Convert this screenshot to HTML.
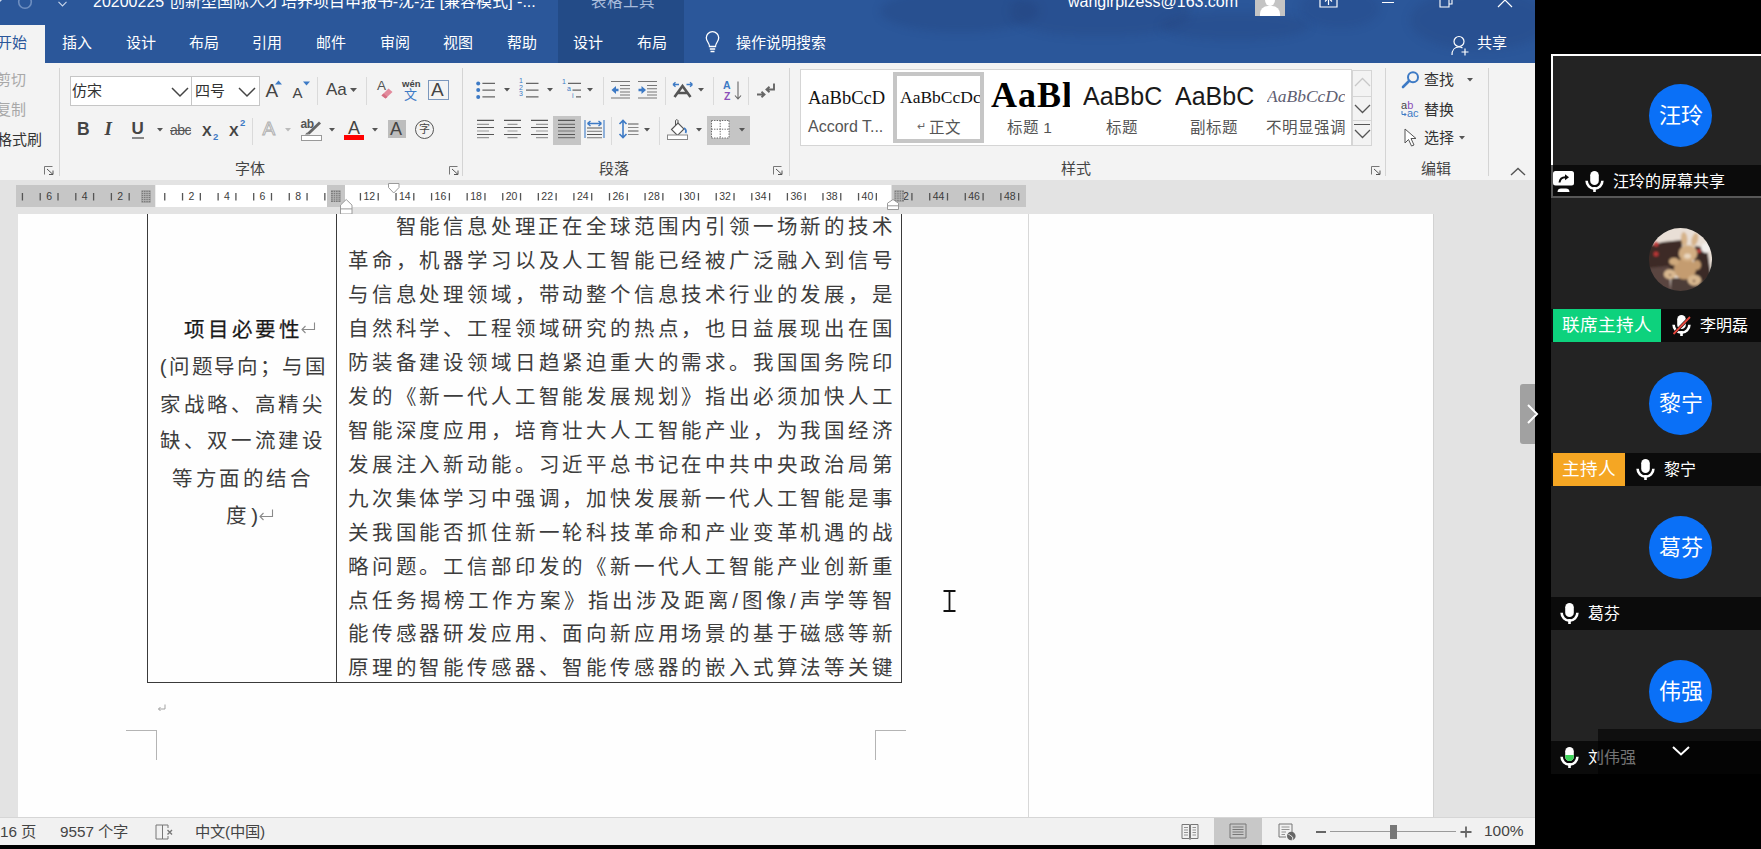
<!DOCTYPE html>
<html lang="zh-CN"><head><meta charset="utf-8">
<style>
*{box-sizing:border-box}
html,body{margin:0;padding:0}
body{width:1761px;height:849px;overflow:hidden;background:#000;position:relative;font-family:"Liberation Sans",sans-serif;color:#262626}
.a{position:absolute;white-space:nowrap}
svg{position:absolute;overflow:visible}
#word{position:absolute;left:0;top:0;width:1535px;height:845px;background:#e3e3e3;overflow:hidden}
#blue{position:absolute;left:0;top:0;width:1535px;height:63px;background:#2b579a}
#ctx{position:absolute;left:558px;top:0;width:126px;height:63px;background:#234b87}
.tab{position:absolute;top:33px;font-size:15px;color:#fff;line-height:20px;white-space:nowrap}
#ribbon{position:absolute;left:0;top:63px;width:1535px;height:117px;background:#f3f3f3}
.sep{position:absolute;top:5px;width:1px;height:108px;background:#d4d4d4}
.glabel{position:absolute;top:96px;font-size:15px;color:#444;line-height:20px;white-space:nowrap}
.rl{position:absolute;font-size:14px;color:#333;line-height:18px;white-space:nowrap}
#ruler{position:absolute;left:16px;top:185px;width:1010px;height:22px;background:#c6c6c6}
#page{position:absolute;left:18px;top:214px;width:1415px;height:603px;background:#fefefe;overflow:hidden}
.fl{position:absolute;display:flex;justify-content:space-between;height:24px;line-height:24px;font-size:20.5px;color:#3d3d3d;font-weight:400}
.fl span{display:block}
.fl.b{font-weight:400;color:#1a1a1a;-webkit-text-stroke:0.25px #1a1a1a}
#status{position:absolute;left:0;top:817px;width:1535px;height:28px;background:#f1f1f1;border-top:1px solid #d6d6d6}
.st{position:absolute;top:4px;font-size:15.3px;color:#444;line-height:20px;white-space:nowrap}
#panel{position:absolute;left:1535px;top:0;width:226px;height:849px;background:#000}
.tile{position:absolute;left:16px;width:210px;background:#232323}
.circ{position:absolute;left:114px;width:63px;height:63px;border-radius:50%;background:#0a70f7;color:#fff;font-size:22px;text-align:center;line-height:63px}
.nbar{position:absolute;left:0;width:210px;height:32px;background:#0e0e0e;color:#fff;font-size:15px;line-height:32px;white-space:nowrap}
</style></head><body>
<div id="word">
  <div id="blue"></div>
  <div class="a" style="left:880px;top:-10px;width:160px;height:42px;border-radius:50%;background:rgba(25,45,95,0.16);filter:blur(4px)"></div>
  <div class="a" style="left:1010px;top:-14px;width:180px;height:50px;border-radius:45%;background:rgba(25,45,95,0.14);filter:blur(4px)"></div>
  <div class="a" style="left:1160px;top:12px;width:150px;height:28px;border-radius:50%;background:rgba(25,45,95,0.14);filter:blur(4px)"></div>
  <div class="a" style="left:1300px;top:-12px;width:80px;height:40px;border-radius:50%;background:rgba(25,45,95,0.12);filter:blur(4px)"></div>
  <div class="a" style="left:1410px;top:-10px;width:140px;height:60px;border-radius:50%;background:rgba(25,45,95,0.14);filter:blur(5px)"></div>
  <div id="ctx"></div>
  <!-- title bar -->
  <svg style="left:-4px;top:-4px" width="8" height="8" viewBox="0 0 8 8"><path d="M1 3L4 6L7 3Z" fill="#c9d6ea"/></svg>
  <svg style="left:17px;top:-6px" width="16" height="18" viewBox="0 0 16 18"><circle cx="8" cy="8" r="6.3" stroke="#6f8fc0" stroke-width="1.6" fill="none"/></svg>
  <svg style="left:58px;top:1px" width="9" height="6" viewBox="0 0 9 6"><path d="M0.5 0.8L4.5 5L8.5 0.8" stroke="#c9d6ea" stroke-width="1.1" fill="none"/></svg>
  <div class="a" style="left:93px;top:-7px;font-size:16px;line-height:18px;color:#fff">20200225 创新型国际人才培养项目申报书-沈-汪 [兼容模式] -...</div>
  <div class="a" style="left:591px;top:-7px;font-size:15.5px;line-height:18px;color:#a9bcdb">表格工具</div>
  <div class="a" style="left:1068px;top:-7px;font-size:16px;line-height:18px;color:#fff">wangirpizess@163.com</div>
  <div class="a" style="left:1255px;top:0;width:30px;height:16px;background:#c4c4c4;overflow:hidden">
    <div class="a" style="left:10px;top:-6px;width:10px;height:12px;border-radius:50%;background:#fff"></div>
    <div class="a" style="left:5px;top:6px;width:20px;height:14px;border-radius:8px 8px 0 0;background:#fff"></div>
  </div>
  <svg style="left:1319px;top:-6px" width="19" height="14" viewBox="0 0 19 14"><path d="M1 4V13H18V4M6 7.5L9.5 4L13 7.5M9.5 4V11" stroke="#fff" stroke-width="1.2" fill="none"/></svg>
  <div class="a" style="left:1382px;top:2px;width:12px;height:1px;background:#fff"></div>
  <svg style="left:1439px;top:-5px" width="15" height="13" viewBox="0 0 15 13"><path d="M1 4V12H10V4ZM4 4V1H13V9H10" stroke="#fff" stroke-width="1.1" fill="none"/></svg>
  <svg style="left:1497px;top:-7px" width="16" height="15" viewBox="0 0 16 15"><path d="M1 0L15 14M15 0L1 14" stroke="#fff" stroke-width="1.2"/></svg>
  <!-- tabs -->
  <div class="a" style="left:0;top:25px;width:45px;height:38px;background:#f3f3f3"></div>
  <div class="tab" style="left:-3px;color:#2b579a">开始</div>
  <div class="tab" style="left:62px">插入</div>
  <div class="tab" style="left:126px">设计</div>
  <div class="tab" style="left:189px">布局</div>
  <div class="tab" style="left:252px">引用</div>
  <div class="tab" style="left:316px">邮件</div>
  <div class="tab" style="left:380px">审阅</div>
  <div class="tab" style="left:443px">视图</div>
  <div class="tab" style="left:507px">帮助</div>
  <div class="tab" style="left:573px">设计</div>
  <div class="tab" style="left:637px">布局</div>
  <svg style="left:705px;top:31px" width="15" height="23" viewBox="0 0 15 23"><path d="M4.5 15.5C4.5 12 1.3 10.5 1.3 6.8A6.2 6.2 0 0 1 13.7 6.8C13.7 10.5 10.5 12 10.5 15.5Z" stroke="#fff" stroke-width="1.3" fill="none"/><path d="M4.8 18H10.2M5.5 20.5H9.5" stroke="#fff" stroke-width="1.3"/></svg>
  <div class="tab" style="left:736px">操作说明搜索</div>
  <svg style="left:1451px;top:35px" width="19" height="21" viewBox="0 0 19 21"><circle cx="8" cy="6.5" r="5" stroke="#fff" stroke-width="1.2" fill="none"/><path d="M1 20C1 15 4 12 8 12C9.5 12 10.5 12.3 11.5 13" stroke="#fff" stroke-width="1.2" fill="none"/><path d="M14 13.5V20.5M10.5 17H17.5" stroke="#fff" stroke-width="1.2"/></svg>
  <div class="tab" style="left:1477px">共享</div>
  <div id="ribbon">
    <!-- clipboard (partial) -->
    <div class="rl" style="left:-4px;top:8px;font-size:15px;color:#a8a8a8">剪切</div>
    <div class="rl" style="left:-4px;top:38px;font-size:15px;color:#a8a8a8">复制</div>
    <div class="rl" style="left:-3px;top:68px;font-size:15px;color:#333">格式刷</div>
    <svg style="left:44px;top:103px" width="10" height="9" viewBox="0 0 10 9"><path d="M0.5 8.5V0.5H8.5" stroke="#777" fill="none"/><path d="M3 3L9 8.5M9 4.5V8.5H5" stroke="#555" fill="none"/></svg>
    <div class="sep" style="left:59px"></div>

    <!-- font group -->
    <div class="a" style="left:70px;top:13px;width:122px;height:30px;background:#fff;border:1px solid #c6c6c6"></div>
    <div class="a" style="left:191px;top:13px;width:69px;height:30px;background:#fff;border:1px solid #c6c6c6"></div>
    <div class="rl" style="left:72px;top:19px;font-size:15px;color:#333">仿宋</div>
    <div class="rl" style="left:195px;top:19px;font-size:15px;color:#333">四号</div>
    <svg style="left:171px;top:24px" width="18" height="10" viewBox="0 0 18 10"><path d="M1 1L9 9L17 1" stroke="#444" stroke-width="1.5" fill="none"/></svg>
    <svg style="left:238px;top:24px" width="18" height="10" viewBox="0 0 18 10"><path d="M1 1L9 9L17 1" stroke="#444" stroke-width="1.5" fill="none"/></svg>
    <div class="a" style="left:265.5px;top:17px;font-size:19px;line-height:22px;color:#444">A</div>
    <svg style="left:275px;top:17px" width="7" height="5" viewBox="0 0 7 5"><path d="M0 4.5L3.5 0.5L7 4.5Z" fill="#3d7ac5"/></svg>
    <div class="a" style="left:292.5px;top:21px;font-size:15px;line-height:18px;color:#444">A</div>
    <svg style="left:303px;top:18px" width="7" height="5" viewBox="0 0 7 5"><path d="M0 0.5L3.5 4.5L7 0.5Z" fill="#3d7ac5"/></svg>
    <div class="sep" style="left:317px;top:14px;height:28px;background:#dadada"></div>
    <div class="a" style="left:326px;top:17px;font-size:17px;line-height:20px;color:#444">Aa</div>
    <svg style="left:350px;top:25px" width="7" height="4" viewBox="0 0 7 4"><path d="M0 0L3.5 4L7 0Z" fill="#555"/></svg>
    <div class="sep" style="left:366px;top:14px;height:28px;background:#dadada"></div>
    <!-- clear formatting -->
    <div class="a" style="left:377px;top:16px;font-size:13.5px;line-height:14px;color:#555">A</div>
    <svg style="left:380px;top:23px" width="14" height="13" viewBox="0 0 14 13"><path d="M1.5 9.5L8.5 2.5L12.5 6L5.5 12.5Z" fill="#e28a9c"/><path d="M1.5 9.5L3.5 7.5L7.5 11L5.5 12.5Z" fill="#d46e82"/></svg>
    <!-- wen -->
    <div class="a" style="left:402px;top:15px;font-size:9.5px;line-height:11px;color:#444;font-weight:700">wén</div>
    <div class="a" style="left:404px;top:24px;font-size:13px;line-height:15px;color:#3d7ac5">文</div>
    <!-- boxed A -->
    <div class="a" style="left:428px;top:17px;width:21px;height:20px;border:1px solid #7b97bd"></div>
    <div class="a" style="left:431px;top:16px;font-size:19px;line-height:22px;color:#444">A</div>

    <!-- row 2 -->
    <div class="a" style="left:77px;top:56px;font-size:17.5px;line-height:20px;color:#444;font-weight:700">B</div>
    <div class="a" style="left:104.5px;top:55px;font-size:19px;line-height:21px;color:#444;font-style:italic;font-weight:700;font-family:'Liberation Serif',serif">I</div>
    <div class="a" style="left:131.5px;top:56px;font-size:17px;line-height:20px;color:#444;font-weight:700">U</div>
    <div class="a" style="left:132px;top:74px;width:12px;height:1.5px;background:#888"></div>
    <svg style="left:157px;top:65px" width="6" height="4" viewBox="0 0 6 4"><path d="M0 0L3 3.5L6 0Z" fill="#555"/></svg>
    <div class="a" style="left:170px;top:58px;font-size:14px;line-height:18px;color:#555;letter-spacing:-0.5px">abc</div>
    <div class="a" style="left:170px;top:67px;width:21px;height:1px;background:#555"></div>
    <div class="a" style="left:202px;top:60px;font-size:14.5px;line-height:17px;color:#444;font-weight:700">X</div>
    <div class="a" style="left:213px;top:69px;font-size:9.5px;line-height:10px;color:#3d7ac5;font-weight:700">2</div>
    <div class="a" style="left:229px;top:60px;font-size:14.5px;line-height:17px;color:#444;font-weight:700">X</div>
    <div class="a" style="left:240px;top:55px;font-size:9.5px;line-height:10px;color:#3d7ac5;font-weight:700">2</div>
    <div class="sep" style="left:252px;top:55px;height:27px;background:#dadada"></div>
    <div class="a" style="left:262.5px;top:55px;font-size:19px;line-height:22px;color:#fbfbfb;-webkit-text-stroke:1px #b0b0b0">A</div>
    <svg style="left:285px;top:65px" width="6" height="4" viewBox="0 0 6 4"><path d="M0 0L3 3.5L6 0Z" fill="#bbb"/></svg>
    <!-- highlighter -->
    <div class="a" style="left:300.5px;top:55px;font-size:12px;line-height:13px;color:#555;font-weight:700;letter-spacing:-0.5px">ab</div>
    <svg style="left:304px;top:57px" width="18" height="15" viewBox="0 0 18 15"><path d="M3 13L15 1.5L17 3.5L5.5 14.5Z" fill="#666"/><path d="M1 14.5L3 12.5L5 14.5Z" fill="#666"/></svg>
    <div class="a" style="left:301px;top:135px;width:21px;height:6px;background:#fff;border:1px solid #999;top:72px"></div>
    <svg style="left:329px;top:65px" width="6" height="4" viewBox="0 0 6 4"><path d="M0 0L3 3.5L6 0Z" fill="#555"/></svg>
    <!-- font color -->
    <div class="a" style="left:348px;top:55px;font-size:18px;line-height:20px;color:#444">A</div>
    <div class="a" style="left:344px;top:72px;width:20px;height:5px;background:#ff0000"></div>
    <svg style="left:372px;top:65px" width="6" height="4" viewBox="0 0 6 4"><path d="M0 0L3 3.5L6 0Z" fill="#555"/></svg>
    <!-- shaded A -->
    <div class="a" style="left:388px;top:57px;width:18px;height:18px;background:#bdbdbd"></div>
    <div class="a" style="left:390px;top:56px;font-size:18px;line-height:20px;color:#444">A</div>
    <!-- circled 字 -->
    <div class="a" style="left:415px;top:57px;width:19px;height:19px;border:1.3px solid #555;border-radius:50%"></div>
    <div class="a" style="left:419px;top:59px;font-size:11px;line-height:14px;color:#444">字</div>
    <svg style="left:449px;top:103px" width="10" height="9" viewBox="0 0 10 9"><path d="M0.5 8.5V0.5H8.5" stroke="#777" fill="none"/><path d="M3 3L9 8.5M9 4.5V8.5H5" stroke="#555" fill="none"/></svg>
    <div class="glabel" style="left:235px">字体</div>
    <div class="sep" style="left:462px"></div>
    <!-- paragraph group row1 -->
    <svg style="left:475px;top:17px" width="22" height="18" viewBox="0 0 22 18">
      <circle cx="3.2" cy="3.4" r="2" fill="#3d7ac5"/><circle cx="3.2" cy="10.1" r="2" fill="#3d7ac5"/><circle cx="3.2" cy="16.9" r="2" fill="#3d7ac5"/>
      <path d="M7.4 3.4H20M7.4 10.1H20M7.4 16.9H20" stroke="#666" stroke-width="1.1"/>
    </svg>
    <svg style="left:504px;top:25px" width="6" height="4" viewBox="0 0 6 4"><path d="M0 0L3 3.5L6 0Z" fill="#555"/></svg>
    <div class="a" style="left:519px;top:15px;font-size:7px;line-height:6.7px;color:#3d7ac5;white-space:pre">1
2
3</div>
    <svg style="left:525px;top:17px" width="14" height="18" viewBox="0 0 14 18"><path d="M1 3.4H13.5M1 10.1H13.5M1 16.9H13.5" stroke="#666" stroke-width="1.1"/></svg>
    <svg style="left:547px;top:25px" width="6" height="4" viewBox="0 0 6 4"><path d="M0 0L3 3.5L6 0Z" fill="#555"/></svg>
    <div class="a" style="left:562px;top:15px;font-size:7px;line-height:7px;color:#3d7ac5">1</div>
    <div class="a" style="left:567px;top:22px;font-size:7px;line-height:7px;color:#3d7ac5">a</div>
    <div class="a" style="left:572px;top:29px;font-size:7px;line-height:7px;color:#3d7ac5">i</div>
    <svg style="left:567px;top:17px" width="15" height="18" viewBox="0 0 15 18"><path d="M1 3.4H14M5.5 10.1H14M9 16.9H14" stroke="#666" stroke-width="1.1"/></svg>
    <svg style="left:587px;top:25px" width="6" height="4" viewBox="0 0 6 4"><path d="M0 0L3 3.5L6 0Z" fill="#555"/></svg>
    <div class="sep" style="left:603px;top:14px;height:28px;background:#dadada"></div>
    <!-- decrease indent -->
    <svg style="left:610px;top:17px" width="21" height="19" viewBox="0 0 21 19">
      <path d="M1 1.5H20M10 5.5H20M10 8.8H20M10 12H20M10 15H20M1 18H20" stroke="#777" stroke-width="1.1"/>
      <path d="M1.5 10L6 6V8.8H8.5V11.2H6V14Z" fill="#3d7ac5"/>
    </svg>
    <svg style="left:637px;top:17px" width="21" height="19" viewBox="0 0 21 19">
      <path d="M1 1.5H20M10 5.5H20M10 8.8H20M10 12H20M10 15H20M1 18H20" stroke="#777" stroke-width="1.1"/>
      <path d="M9 10L4.5 6V8.8H1.5V11.2H4.5V14Z" fill="#3d7ac5"/>
    </svg>
    <div class="sep" style="left:665px;top:14px;height:28px;background:#dadada"></div>
    <!-- chinese layout -->
    <svg style="left:672px;top:18px" width="22" height="17" viewBox="0 0 22 17">
      <path d="M2.5 16L10.5 5L18.5 16M5.5 12H15.5" stroke="#555" stroke-width="2.6" fill="none"/>
      <path d="M1 3.5H7M1 3.5L3.5 1.2M1 3.5L3.5 5.8" stroke="#3d7ac5" stroke-width="1.3" fill="none"/>
      <path d="M14.5 3.5H20.5M20.5 3.5L18 1.2M20.5 3.5L18 5.8" stroke="#3d7ac5" stroke-width="1.3" fill="none"/>
    </svg>
    <svg style="left:698px;top:25px" width="6" height="4" viewBox="0 0 6 4"><path d="M0 0L3 3.5L6 0Z" fill="#555"/></svg>
    <div class="sep" style="left:713px;top:14px;height:28px;background:#dadada"></div>
    <!-- sort -->
    <div class="a" style="left:723px;top:17px;font-size:10.5px;line-height:10px;color:#3d7ac5;font-weight:700">A</div>
    <div class="a" style="left:724px;top:28px;font-size:10.5px;line-height:10px;color:#8b4fb8;font-weight:700">Z</div>
    <svg style="left:734px;top:18px" width="8" height="19" viewBox="0 0 8 19"><path d="M4 0.5V18M1 14.5L4 18L7 14.5" stroke="#666" stroke-width="1.1" fill="none"/></svg>
    <div class="sep" style="left:748px;top:14px;height:28px;background:#dadada"></div>
    <!-- show marks -->
    <svg style="left:756px;top:20px" width="20" height="15" viewBox="0 0 20 15">
      <path d="M18 0.5V6.5H11M13.5 3.8L10.5 6.5L13.5 9.2" stroke="#666" stroke-width="1.9" fill="none"/>
      <path d="M1 11.5H8M5.5 8.8L8.5 11.5L5.5 14.2" stroke="#666" stroke-width="1.9" fill="none"/>
    </svg>
    <!-- row2 align -->
    <svg style="left:476px;top:56px" width="20" height="19" viewBox="0 0 20 19">
      <path d="M1 1.4H18M1 8.5H18M1 15.5H18" stroke="#555" stroke-width="1.1"/><path d="M1 5.4H13M1 12H13M1 18.6H13" stroke="#999" stroke-width="1.1"/>
    </svg>
    <svg style="left:503px;top:56px" width="20" height="19" viewBox="0 0 20 19">
      <path d="M1 1.4H18M1 8.5H18M1 15.5H18" stroke="#555" stroke-width="1.1"/><path d="M4.5 5.4H14.5M4.5 12H14.5M4.5 18.6H14.5" stroke="#999" stroke-width="1.1"/>
    </svg>
    <svg style="left:530px;top:56px" width="20" height="19" viewBox="0 0 20 19">
      <path d="M1 1.4H18M1 8.5H18M1 15.5H18" stroke="#555" stroke-width="1.1"/><path d="M6 5.4H18M6 12H18M6 18.6H18" stroke="#999" stroke-width="1.1"/>
    </svg>
    <div class="a" style="left:553px;top:53px;width:28px;height:29px;background:#c5c5c5"></div>
    <svg style="left:557px;top:56px" width="20" height="19" viewBox="0 0 20 19">
      <path d="M1 1.4H18M1 8.5H18M1 15.5H18" stroke="#555" stroke-width="1.1"/><path d="M1 5.4H18M1 12H18M1 18.6H18" stroke="#777" stroke-width="1.1"/>
    </svg>
    <svg style="left:584px;top:56px" width="21" height="20" viewBox="0 0 21 20">
      <path d="M1 1V19M20 1V19" stroke="#3d7ac5" stroke-width="1.1"/>
      <path d="M3.5 4.5H17.5M3.5 4.5L6.5 2M3.5 4.5L6.5 7M17.5 4.5L14.5 2M17.5 4.5L14.5 7" stroke="#3d7ac5" stroke-width="1.4" fill="none"/>
      <path d="M3 9H18M3 15.5H18" stroke="#555" stroke-width="1.1"/><path d="M3 12.2H18M3 18.8H18" stroke="#777" stroke-width="1.1"/>
    </svg>
    <div class="sep" style="left:611px;top:54px;height:28px;background:#dadada"></div>
    <svg style="left:618px;top:56px" width="22" height="20" viewBox="0 0 22 20">
      <path d="M5 1.5V18.5M1.5 5L5 1.5L8.5 5M1.5 15L5 18.5L8.5 15" stroke="#3d7ac5" stroke-width="1.6" fill="none"/>
      <path d="M10 5H20.5M10 12H20.5" stroke="#555" stroke-width="1.1"/><path d="M10 8.5H20.5M10 15.5H20.5" stroke="#888" stroke-width="1.1"/>
    </svg>
    <svg style="left:644px;top:65px" width="6" height="4" viewBox="0 0 6 4"><path d="M0 0L3 3.5L6 0Z" fill="#555"/></svg>
    <div class="sep" style="left:659px;top:54px;height:28px;background:#dadada"></div>
    <!-- shading -->
    <svg style="left:667px;top:56px" width="22" height="21" viewBox="0 0 22 21">
      <path d="M4.5 10.5L11 4L17 10L10.5 16.5Z" fill="#fff" stroke="#555" stroke-width="1.1"/>
      <path d="M11 4V1.5A1.4 1.4 0 0 0 8.5 1.5V6" stroke="#555" stroke-width="1" fill="none"/>
      <path d="M17 9C19 10 19.5 12.5 18.5 14" stroke="#3d7ac5" stroke-width="1.8" fill="none"/>
      <rect x="0.5" y="16" width="20" height="4.5" fill="#fff" stroke="#888" stroke-width="1"/>
    </svg>
    <svg style="left:696px;top:65px" width="6" height="4" viewBox="0 0 6 4"><path d="M0 0L3 3.5L6 0Z" fill="#555"/></svg>
    <div class="a" style="left:707px;top:53px;width:43px;height:29px;background:#c5c5c5"></div>
    <svg style="left:711px;top:57px" width="19" height="19" viewBox="0 0 19 19">
      <rect x="0.5" y="0.5" width="17.5" height="17.5" fill="#fff"/>
      <path d="M0.5 0.5H18M0.5 9.2H18M0.5 18H18M0.5 0.5V18M9.2 0.5V18M18 0.5V18" stroke="#666" stroke-width="1" stroke-dasharray="1.3 1.3" fill="none"/>
    </svg>
    <svg style="left:739px;top:65px" width="6" height="4" viewBox="0 0 6 4"><path d="M0 0L3 3.5L6 0Z" fill="#555"/></svg>
    <svg style="left:773px;top:103px" width="10" height="9" viewBox="0 0 10 9"><path d="M0.5 8.5V0.5H8.5" stroke="#777" fill="none"/><path d="M3 3L9 8.5M9 4.5V8.5H5" stroke="#555" fill="none"/></svg>
    <div class="glabel" style="left:599px">段落</div>
    <div class="sep" style="left:789px"></div>
    <!-- styles gallery -->
    <div class="a" style="left:800px;top:6px;width:552px;height:77px;background:#fff;border:1px solid #d5d5d5"></div>
    <div class="a" style="left:808px;top:22.5px;font-family:'Liberation Serif',serif;font-size:18.5px;line-height:24px;color:#111">AaBbCcD</div>
    <div class="a" style="left:808px;top:54.5px;font-size:16px;line-height:18px;color:#555">Accord T...</div>
    <div class="a" style="left:893px;top:9px;width:91px;height:71px;border:4px solid #c6c6c6;overflow:hidden">
      <div class="a" style="left:3px;top:10px;font-family:'Liberation Serif',serif;font-size:17.5px;line-height:22px;color:#111">AaBbCcDc</div>
    </div>
    <div class="a" style="left:917px;top:56px;font-size:11px;line-height:14px;color:#666">&#8629;</div>
    <div class="a" style="left:929px;top:55.5px;font-size:15.5px;line-height:18px;color:#555">正文</div>
    <div class="a" style="left:991px;top:12px;font-family:'Liberation Serif',serif;font-size:36px;line-height:40px;color:#000;font-weight:700;letter-spacing:1px;width:79px;overflow:hidden">AaBl</div>
    <div class="a" style="left:1007px;top:55.5px;font-size:15.5px;line-height:18px;color:#555">标题 1</div>
    <div class="a" style="left:1083px;top:17px;font-size:25px;line-height:32px;color:#1a1a1a;width:79px;overflow:hidden">AaBbC</div>
    <div class="a" style="left:1106px;top:55.5px;font-size:15.5px;line-height:18px;color:#555">标题</div>
    <div class="a" style="left:1175px;top:17px;font-size:25px;line-height:32px;color:#1a1a1a;width:79px;overflow:hidden">AaBbC</div>
    <div class="a" style="left:1190px;top:55.5px;font-size:15.5px;line-height:18px;color:#555">副标题</div>
    <div class="a" style="left:1267px;top:22px;font-family:'Liberation Serif',serif;font-style:italic;font-size:17.5px;line-height:22px;color:#606072;width:78px;overflow:hidden">AaBbCcDc</div>
    <div class="a" style="left:1266px;top:55.5px;font-size:15.5px;line-height:18px;color:#555">不明显强调</div>
    <div class="a" style="left:1352px;top:7px;width:20px;height:76px;background:#f3f3f3;border:1px solid #d5d5d5"></div>
    <div class="a" style="left:1353px;top:33px;width:18px;height:1px;background:#d5d5d5"></div>
    <div class="a" style="left:1353px;top:57px;width:18px;height:1px;background:#d5d5d5"></div>
    <svg style="left:1354px;top:14px" width="17" height="10" viewBox="0 0 17 10"><path d="M1 9L8.5 1.5L16 9" stroke="#c8c8c8" stroke-width="1.3" fill="none"/></svg>
    <svg style="left:1354px;top:41px" width="17" height="10" viewBox="0 0 17 10"><path d="M1 1L8.5 8.5L16 1" stroke="#555" stroke-width="1.3" fill="none"/></svg>
    <div class="a" style="left:1354px;top:61px;width:16px;height:1.3px;background:#555"></div>
    <svg style="left:1354px;top:66px" width="17" height="10" viewBox="0 0 17 10"><path d="M1 1L8.5 8.5L16 1" stroke="#555" stroke-width="1.3" fill="none"/></svg>
    <svg style="left:1371px;top:103px" width="10" height="9" viewBox="0 0 10 9"><path d="M0.5 8.5V0.5H8.5" stroke="#777" fill="none"/><path d="M3 3L9 8.5M9 4.5V8.5H5" stroke="#555" fill="none"/></svg>
    <div class="glabel" style="left:1061px">样式</div>
    <div class="sep" style="left:1385px"></div>
    <!-- editing -->
    <svg style="left:1401px;top:8px" width="19" height="18" viewBox="0 0 19 18">
      <circle cx="12" cy="6.2" r="5" stroke="#3d7ac5" stroke-width="2" fill="none"/>
      <path d="M8.3 9.8L2 16" stroke="#3d7ac5" stroke-width="2.6" stroke-linecap="round"/>
    </svg>
    <div class="rl" style="left:1424px;top:8px;font-size:15px;color:#333">查找</div>
    <svg style="left:1467px;top:15px" width="6" height="4" viewBox="0 0 6 4"><path d="M0 0L3 3.5L6 0Z" fill="#555"/></svg>
    <div class="a" style="left:1401px;top:37px;font-size:11px;line-height:10px;color:#444">a<span style="color:#8b4fb8">b</span></div>
    <div class="a" style="left:1407px;top:45px;font-size:11px;line-height:10px;color:#3d7ac5">ac</div>
    <svg style="left:1401px;top:48px" width="6" height="6" viewBox="0 0 6 6"><path d="M1 0V3.5H5M3.5 2L5 3.5L3.5 5" stroke="#3d7ac5" stroke-width="1" fill="none"/></svg>
    <div class="rl" style="left:1424px;top:38px;font-size:15px;color:#333">替换</div>
    <svg style="left:1404px;top:65px" width="14" height="19" viewBox="0 0 14 19">
      <path d="M1 1V15L4.5 11.5L7.5 18L10 17L7 10.5H12Z" fill="#fff" stroke="#555" stroke-width="1"/>
    </svg>
    <div class="rl" style="left:1424px;top:66px;font-size:15px;color:#333">选择</div>
    <svg style="left:1459px;top:73px" width="6" height="4" viewBox="0 0 6 4"><path d="M0 0L3 3.5L6 0Z" fill="#555"/></svg>
    <div class="glabel" style="left:1421px">编辑</div>
    <div class="sep" style="left:1488px"></div>
    <svg style="left:1510px;top:104px" width="16" height="9" viewBox="0 0 16 9"><path d="M1 8L8 1.5L15 8" stroke="#555" stroke-width="1.4" fill="none"/></svg>
  </div>
<svg style="left:16px;top:185px" width="1010" height="22" viewBox="0 0 1010 22"><rect x="0" y="0" width="1010" height="22" fill="#c6c6c6"/><rect x="139.3" y="0" width="171.7" height="22" fill="#fff"/><rect x="329" y="0" width="546.5" height="22" fill="#fff"/><rect x="5.78" y="8" width="1.3" height="7.5" fill="#555"/><rect x="23.57" y="8" width="1.3" height="7.5" fill="#555"/><rect x="41.36" y="8" width="1.3" height="7.5" fill="#555"/><rect x="59.15" y="8" width="1.3" height="7.5" fill="#555"/><rect x="76.94" y="8" width="1.3" height="7.5" fill="#555"/><rect x="94.73" y="8" width="1.3" height="7.5" fill="#555"/><rect x="112.52" y="8" width="1.3" height="7.5" fill="#555"/><rect x="148.10" y="8" width="1.3" height="7.5" fill="#555"/><rect x="165.89" y="8" width="1.3" height="7.5" fill="#555"/><rect x="183.68" y="8" width="1.3" height="7.5" fill="#555"/><rect x="201.47" y="8" width="1.3" height="7.5" fill="#555"/><rect x="219.26" y="8" width="1.3" height="7.5" fill="#555"/><rect x="237.05" y="8" width="1.3" height="7.5" fill="#555"/><rect x="254.84" y="8" width="1.3" height="7.5" fill="#555"/><rect x="272.62" y="8" width="1.3" height="7.5" fill="#555"/><rect x="290.41" y="8" width="1.3" height="7.5" fill="#555"/><rect x="308.20" y="8" width="1.3" height="7.5" fill="#555"/><rect x="343.78" y="8" width="1.3" height="7.5" fill="#555"/><rect x="361.57" y="8" width="1.3" height="7.5" fill="#555"/><rect x="379.37" y="8" width="1.3" height="7.5" fill="#555"/><rect x="397.15" y="8" width="1.3" height="7.5" fill="#555"/><rect x="414.94" y="8" width="1.3" height="7.5" fill="#555"/><rect x="432.73" y="8" width="1.3" height="7.5" fill="#555"/><rect x="450.52" y="8" width="1.3" height="7.5" fill="#555"/><rect x="468.31" y="8" width="1.3" height="7.5" fill="#555"/><rect x="486.10" y="8" width="1.3" height="7.5" fill="#555"/><rect x="503.89" y="8" width="1.3" height="7.5" fill="#555"/><rect x="521.68" y="8" width="1.3" height="7.5" fill="#555"/><rect x="539.48" y="8" width="1.3" height="7.5" fill="#555"/><rect x="557.26" y="8" width="1.3" height="7.5" fill="#555"/><rect x="575.05" y="8" width="1.3" height="7.5" fill="#555"/><rect x="592.84" y="8" width="1.3" height="7.5" fill="#555"/><rect x="610.63" y="8" width="1.3" height="7.5" fill="#555"/><rect x="628.42" y="8" width="1.3" height="7.5" fill="#555"/><rect x="646.22" y="8" width="1.3" height="7.5" fill="#555"/><rect x="664.00" y="8" width="1.3" height="7.5" fill="#555"/><rect x="681.79" y="8" width="1.3" height="7.5" fill="#555"/><rect x="699.58" y="8" width="1.3" height="7.5" fill="#555"/><rect x="717.37" y="8" width="1.3" height="7.5" fill="#555"/><rect x="735.16" y="8" width="1.3" height="7.5" fill="#555"/><rect x="752.96" y="8" width="1.3" height="7.5" fill="#555"/><rect x="770.75" y="8" width="1.3" height="7.5" fill="#555"/><rect x="788.53" y="8" width="1.3" height="7.5" fill="#555"/><rect x="806.32" y="8" width="1.3" height="7.5" fill="#555"/><rect x="824.11" y="8" width="1.3" height="7.5" fill="#555"/><rect x="841.90" y="8" width="1.3" height="7.5" fill="#555"/><rect x="859.70" y="8" width="1.3" height="7.5" fill="#555"/><rect x="895.27" y="8" width="1.3" height="7.5" fill="#555"/><rect x="913.06" y="8" width="1.3" height="7.5" fill="#555"/><rect x="930.85" y="8" width="1.3" height="7.5" fill="#555"/><rect x="948.64" y="8" width="1.3" height="7.5" fill="#555"/><rect x="966.44" y="8" width="1.3" height="7.5" fill="#555"/><rect x="984.23" y="8" width="1.3" height="7.5" fill="#555"/><rect x="1002.01" y="8" width="1.3" height="7.5" fill="#555"/><text x="33.06" y="14.8" text-anchor="middle" font-size="10.5" font-family="Liberation Sans" fill="#3c3c3c">6</text><text x="68.64" y="14.8" text-anchor="middle" font-size="10.5" font-family="Liberation Sans" fill="#3c3c3c">4</text><text x="104.22" y="14.8" text-anchor="middle" font-size="10.5" font-family="Liberation Sans" fill="#3c3c3c">2</text><text x="175.38" y="14.8" text-anchor="middle" font-size="10.5" font-family="Liberation Sans" fill="#3c3c3c">2</text><text x="210.96" y="14.8" text-anchor="middle" font-size="10.5" font-family="Liberation Sans" fill="#3c3c3c">4</text><text x="246.54" y="14.8" text-anchor="middle" font-size="10.5" font-family="Liberation Sans" fill="#3c3c3c">6</text><text x="282.12" y="14.8" text-anchor="middle" font-size="10.5" font-family="Liberation Sans" fill="#3c3c3c">8</text><text x="353.28" y="14.8" text-anchor="middle" font-size="10.5" font-family="Liberation Sans" fill="#3c3c3c">12</text><text x="388.86" y="14.8" text-anchor="middle" font-size="10.5" font-family="Liberation Sans" fill="#3c3c3c">14</text><text x="424.44" y="14.8" text-anchor="middle" font-size="10.5" font-family="Liberation Sans" fill="#3c3c3c">16</text><text x="460.02" y="14.8" text-anchor="middle" font-size="10.5" font-family="Liberation Sans" fill="#3c3c3c">18</text><text x="495.60" y="14.8" text-anchor="middle" font-size="10.5" font-family="Liberation Sans" fill="#3c3c3c">20</text><text x="531.18" y="14.8" text-anchor="middle" font-size="10.5" font-family="Liberation Sans" fill="#3c3c3c">22</text><text x="566.76" y="14.8" text-anchor="middle" font-size="10.5" font-family="Liberation Sans" fill="#3c3c3c">24</text><text x="602.34" y="14.8" text-anchor="middle" font-size="10.5" font-family="Liberation Sans" fill="#3c3c3c">26</text><text x="637.92" y="14.8" text-anchor="middle" font-size="10.5" font-family="Liberation Sans" fill="#3c3c3c">28</text><text x="673.50" y="14.8" text-anchor="middle" font-size="10.5" font-family="Liberation Sans" fill="#3c3c3c">30</text><text x="709.08" y="14.8" text-anchor="middle" font-size="10.5" font-family="Liberation Sans" fill="#3c3c3c">32</text><text x="744.66" y="14.8" text-anchor="middle" font-size="10.5" font-family="Liberation Sans" fill="#3c3c3c">34</text><text x="780.24" y="14.8" text-anchor="middle" font-size="10.5" font-family="Liberation Sans" fill="#3c3c3c">36</text><text x="815.82" y="14.8" text-anchor="middle" font-size="10.5" font-family="Liberation Sans" fill="#3c3c3c">38</text><text x="851.40" y="14.8" text-anchor="middle" font-size="10.5" font-family="Liberation Sans" fill="#3c3c3c">40</text><text x="889.98" y="14.8" text-anchor="middle" font-size="10.5" font-family="Liberation Sans" fill="#3c3c3c">2</text><text x="922.56" y="14.8" text-anchor="middle" font-size="10.5" font-family="Liberation Sans" fill="#3c3c3c">44</text><text x="958.14" y="14.8" text-anchor="middle" font-size="10.5" font-family="Liberation Sans" fill="#3c3c3c">46</text><text x="993.72" y="14.8" text-anchor="middle" font-size="10.5" font-family="Liberation Sans" fill="#3c3c3c">48</text><rect x="125.5" y="5.5" width="9" height="12" fill="#7a7a7a"/><rect x="127.25" y="5.5" width="0.8" height="12" fill="#b8b8b8"/><rect x="129.50" y="5.5" width="0.8" height="12" fill="#b8b8b8"/><rect x="131.75" y="5.5" width="0.8" height="12" fill="#b8b8b8"/><rect x="125.5" y="7.10" width="9" height="0.8" fill="#b8b8b8"/><rect x="125.5" y="9.10" width="9" height="0.8" fill="#b8b8b8"/><rect x="125.5" y="11.10" width="9" height="0.8" fill="#b8b8b8"/><rect x="125.5" y="13.10" width="9" height="0.8" fill="#b8b8b8"/><rect x="125.5" y="15.10" width="9" height="0.8" fill="#b8b8b8"/><rect x="315" y="5.5" width="9.5" height="11.5" fill="#7a7a7a"/><rect x="316.88" y="5.5" width="0.8" height="11.5" fill="#b8b8b8"/><rect x="319.25" y="5.5" width="0.8" height="11.5" fill="#b8b8b8"/><rect x="321.62" y="5.5" width="0.8" height="11.5" fill="#b8b8b8"/><rect x="315" y="7.02" width="9.5" height="0.8" fill="#b8b8b8"/><rect x="315" y="8.93" width="9.5" height="0.8" fill="#b8b8b8"/><rect x="315" y="10.85" width="9.5" height="0.8" fill="#b8b8b8"/><rect x="315" y="12.77" width="9.5" height="0.8" fill="#b8b8b8"/><rect x="315" y="14.68" width="9.5" height="0.8" fill="#b8b8b8"/><rect x="878.5" y="5.5" width="9.5" height="11" fill="#7a7a7a"/><rect x="880.38" y="5.5" width="0.8" height="11" fill="#b8b8b8"/><rect x="882.75" y="5.5" width="0.8" height="11" fill="#b8b8b8"/><rect x="885.12" y="5.5" width="0.8" height="11" fill="#b8b8b8"/><rect x="878.5" y="6.93" width="9.5" height="0.8" fill="#b8b8b8"/><rect x="878.5" y="8.77" width="9.5" height="0.8" fill="#b8b8b8"/><rect x="878.5" y="10.60" width="9.5" height="0.8" fill="#b8b8b8"/><rect x="878.5" y="12.43" width="9.5" height="0.8" fill="#b8b8b8"/><rect x="878.5" y="14.27" width="9.5" height="0.8" fill="#b8b8b8"/></svg>
<svg style="left:340px;top:199px" width="12.5" height="15.5" viewBox="0 0 12.5 15.5"><path d="M0.5 6.1L6.2 0.5L12.0 6.1V15.0H0.5Z" fill="#fff" stroke="#9a9a9a" stroke-width="1"/><path d="M0.5 9.9H12.0" stroke="#9a9a9a" stroke-width="1"/></svg>
<svg style="left:886.5px;top:199px" width="12" height="11" viewBox="0 0 12 11"><path d="M0.5 4.2L6.0 0.5L11.5 4.2V10.5H0.5Z" fill="#fff" stroke="#9a9a9a" stroke-width="1"/><path d="M0.5 6.8H11.5" stroke="#9a9a9a" stroke-width="1"/></svg>
<svg style="left:388px;top:183px" width="12" height="11" viewBox="0 0 12 11"><path d="M0.5 0.5H11V4.5L5.75 10L0.5 4.5Z" fill="#fff" stroke="#9a9a9a" stroke-width="1"/></svg>
  <div class="a" style="left:1433px;top:214px;width:1px;height:603px;background:#d2d2d2"></div>
  <div id="page">
    <div class="a" style="left:1010px;top:0;width:1px;height:603px;background:#d8d8d8"></div>
    <div class="a" style="left:129px;top:0;width:1px;height:469px;background:#3a3a3a"></div>
    <div class="a" style="left:318px;top:0;width:1px;height:469px;background:#3a3a3a"></div>
    <div class="a" style="left:883px;top:0;width:1px;height:469px;background:#3a3a3a"></div>
    <div class="a" style="left:129px;top:468px;width:755px;height:1px;background:#3a3a3a"></div>
<div class="fl" style="left:377.6px;top:1.0px;width:496.4px"><span>智</span><span>能</span><span>信</span><span>息</span><span>处</span><span>理</span><span>正</span><span>在</span><span>全</span><span>球</span><span>范</span><span>围</span><span>内</span><span>引</span><span>领</span><span>一</span><span>场</span><span>新</span><span>的</span><span>技</span><span>术</span></div>
<div class="fl" style="left:330.0px;top:34.9px;width:544.0px"><span>革</span><span>命</span><span>，</span><span>机</span><span>器</span><span>学</span><span>习</span><span>以</span><span>及</span><span>人</span><span>工</span><span>智</span><span>能</span><span>已</span><span>经</span><span>被</span><span>广</span><span>泛</span><span>融</span><span>入</span><span>到</span><span>信</span><span>号</span></div>
<div class="fl" style="left:330.0px;top:68.9px;width:544.0px"><span>与</span><span>信</span><span>息</span><span>处</span><span>理</span><span>领</span><span>域</span><span>，</span><span>带</span><span>动</span><span>整</span><span>个</span><span>信</span><span>息</span><span>技</span><span>术</span><span>行</span><span>业</span><span>的</span><span>发</span><span>展</span><span>，</span><span>是</span></div>
<div class="fl" style="left:330.0px;top:102.9px;width:544.0px"><span>自</span><span>然</span><span>科</span><span>学</span><span>、</span><span>工</span><span>程</span><span>领</span><span>域</span><span>研</span><span>究</span><span>的</span><span>热</span><span>点</span><span>，</span><span>也</span><span>日</span><span>益</span><span>展</span><span>现</span><span>出</span><span>在</span><span>国</span></div>
<div class="fl" style="left:330.0px;top:136.8px;width:544.0px"><span>防</span><span>装</span><span>备</span><span>建</span><span>设</span><span>领</span><span>域</span><span>日</span><span>趋</span><span>紧</span><span>迫</span><span>重</span><span>大</span><span>的</span><span>需</span><span>求</span><span>。</span><span>我</span><span>国</span><span>国</span><span>务</span><span>院</span><span>印</span></div>
<div class="fl" style="left:330.0px;top:170.8px;width:544.0px"><span>发</span><span>的</span><span>《</span><span>新</span><span>一</span><span>代</span><span>人</span><span>工</span><span>智</span><span>能</span><span>发</span><span>展</span><span>规</span><span>划</span><span>》</span><span>指</span><span>出</span><span>必</span><span>须</span><span>加</span><span>快</span><span>人</span><span>工</span></div>
<div class="fl" style="left:330.0px;top:204.7px;width:544.0px"><span>智</span><span>能</span><span>深</span><span>度</span><span>应</span><span>用</span><span>，</span><span>培</span><span>育</span><span>壮</span><span>大</span><span>人</span><span>工</span><span>智</span><span>能</span><span>产</span><span>业</span><span>，</span><span>为</span><span>我</span><span>国</span><span>经</span><span>济</span></div>
<div class="fl" style="left:330.0px;top:238.7px;width:544.0px"><span>发</span><span>展</span><span>注</span><span>入</span><span>新</span><span>动</span><span>能</span><span>。</span><span>习</span><span>近</span><span>平</span><span>总</span><span>书</span><span>记</span><span>在</span><span>中</span><span>共</span><span>中</span><span>央</span><span>政</span><span>治</span><span>局</span><span>第</span></div>
<div class="fl" style="left:330.0px;top:272.6px;width:544.0px"><span>九</span><span>次</span><span>集</span><span>体</span><span>学</span><span>习</span><span>中</span><span>强</span><span>调</span><span>，</span><span>加</span><span>快</span><span>发</span><span>展</span><span>新</span><span>一</span><span>代</span><span>人</span><span>工</span><span>智</span><span>能</span><span>是</span><span>事</span></div>
<div class="fl" style="left:330.0px;top:306.5px;width:544.0px"><span>关</span><span>我</span><span>国</span><span>能</span><span>否</span><span>抓</span><span>住</span><span>新</span><span>一</span><span>轮</span><span>科</span><span>技</span><span>革</span><span>命</span><span>和</span><span>产</span><span>业</span><span>变</span><span>革</span><span>机</span><span>遇</span><span>的</span><span>战</span></div>
<div class="fl" style="left:330.0px;top:340.5px;width:544.0px"><span>略</span><span>问</span><span>题</span><span>。</span><span>工</span><span>信</span><span>部</span><span>印</span><span>发</span><span>的</span><span>《</span><span>新</span><span>一</span><span>代</span><span>人</span><span>工</span><span>智</span><span>能</span><span>产</span><span>业</span><span>创</span><span>新</span><span>重</span></div>
<div class="fl" style="left:330.0px;top:374.5px;width:544.0px"><span>点</span><span>任</span><span>务</span><span>揭</span><span>榜</span><span>工</span><span>作</span><span>方</span><span>案</span><span>》</span><span>指</span><span>出</span><span>涉</span><span>及</span><span>距</span><span>离</span><span>/</span><span>图</span><span>像</span><span>/</span><span>声</span><span>学</span><span>等</span><span>智</span></div>
<div class="fl" style="left:330.0px;top:408.4px;width:544.0px"><span>能</span><span>传</span><span>感</span><span>器</span><span>研</span><span>发</span><span>应</span><span>用</span><span>、</span><span>面</span><span>向</span><span>新</span><span>应</span><span>用</span><span>场</span><span>景</span><span>的</span><span>基</span><span>于</span><span>磁</span><span>感</span><span>等</span><span>新</span></div>
<div class="fl" style="left:330.0px;top:442.4px;width:544.0px"><span>原</span><span>理</span><span>的</span><span>智</span><span>能</span><span>传</span><span>感</span><span>器</span><span>、</span><span>智</span><span>能</span><span>传</span><span>感</span><span>器</span><span>的</span><span>嵌</span><span>入</span><span>式</span><span>算</span><span>法</span><span>等</span><span>关</span><span>键</span></div>
<div class="fl b" style="left:165.8px;top:103.7px;width:115.6px"><span>项</span><span>目</span><span>必</span><span>要</span><span>性</span></div>
<div class="fl" style="left:141.8px;top:140.5px;width:165.2px"><span>(</span><span>问</span><span>题</span><span>导</span><span>向</span><span>；</span><span>与</span><span>国</span></div>
<div class="fl" style="left:142.0px;top:178.6px;width:162.0px"><span>家</span><span>战</span><span>略</span><span>、</span><span>高</span><span>精</span><span>尖</span></div>
<div class="fl" style="left:142.0px;top:215.4px;width:162.0px"><span>缺</span><span>、</span><span>双</span><span>一</span><span>流</span><span>建</span><span>设</span></div>
<div class="fl" style="left:154.0px;top:252.7px;width:138.0px"><span>等</span><span>方</span><span>面</span><span>的</span><span>结</span><span>合</span></div>
<div class="fl" style="left:208.0px;top:290.3px;width:32.0px"><span>度</span><span>)</span></div>
    <!-- paragraph marks -->
    <svg style="left:282px;top:108px" width="16" height="13" viewBox="0 0 16 13"><path d="M14.5 0.5V7.5H2M5.5 4L2 7.5L5.5 11" stroke="#8a8a8a" stroke-width="1.1" fill="none"/></svg>
    <svg style="left:240px;top:295px" width="16" height="13" viewBox="0 0 16 13"><path d="M14.5 0.5V7.5H2M5.5 4L2 7.5L5.5 11" stroke="#8a8a8a" stroke-width="1.1" fill="none"/></svg>
    <svg style="left:139px;top:490px" width="9" height="9" viewBox="0 0 9 9"><path d="M8 0.5V5H1.5M3.5 3L1.5 5L3.5 7" stroke="#999" stroke-width="0.9" fill="none"/></svg>
    <!-- crop marks -->
    <div class="a" style="left:108px;top:516px;width:31px;height:1px;background:#b4b4b4"></div>
    <div class="a" style="left:138px;top:516px;width:1px;height:30px;background:#b4b4b4"></div>
    <div class="a" style="left:857px;top:516px;width:31px;height:1px;background:#b4b4b4"></div>
    <div class="a" style="left:857px;top:516px;width:1px;height:30px;background:#b4b4b4"></div>
    <!-- I-beam -->
    <svg style="left:925px;top:376px" width="13" height="22" viewBox="0 0 13 22"><path d="M0.5 1H12.5M6.5 1V21M0.5 21H12.5" stroke="#111" stroke-width="1.8"/></svg>
  </div>
  <div class="a" style="left:1520px;top:384px;width:15px;height:60px;background:#a1a1a1;border-radius:3px 0 0 3px"></div>
  <div id="status">
    <div class="st" style="left:0">16 页</div>
    <div class="st" style="left:60px">9557 个字</div>
    <svg style="left:155px;top:6px" width="19" height="16" viewBox="0 0 19 16"><path d="M1 1H7.5V15H1ZM7.5 1H13M7.5 15H13M13 1V4M13 12V15" stroke="#777" stroke-width="1" fill="none"/><path d="M12.5 6L17 10.5M17 6L12.5 10.5" stroke="#777" stroke-width="1.4"/></svg>
    <div class="st" style="left:195px">中文(中国)</div>
    <svg style="left:1181px;top:5px" width="18" height="17" viewBox="0 0 18 17"><path d="M1 1.5H8.5V15.5H1ZM9.5 1.5H17V15.5H9.5Z" stroke="#777" stroke-width="1" fill="none"/><path d="M3 4.5H7M3 7H7M3 9.5H7M3 12H7M11.5 4.5H15M11.5 7H15M11.5 9.5H15M11.5 12H15" stroke="#888" stroke-width="0.9"/><path d="M9 15.5V17" stroke="#777"/></svg>
    <div class="a" style="left:1214px;top:0;width:48px;height:27px;background:#c8c8c8"></div>
    <svg style="left:1229px;top:5px" width="18" height="16" viewBox="0 0 18 16"><path d="M1 1H17V15H1Z" stroke="#777" stroke-width="1" fill="none"/><path d="M3.5 4H14.5M3.5 6.5H14.5M3.5 9H14.5M3.5 11.5H14.5" stroke="#777" stroke-width="1"/></svg>
    <svg style="left:1278px;top:5px" width="19" height="18" viewBox="0 0 19 18"><path d="M1 1H14V9M1 1V14H8" stroke="#777" stroke-width="1" fill="none"/><path d="M3.5 4H11.5M3.5 6.5H11.5M3.5 9H8M3.5 11.5H7" stroke="#888" stroke-width="0.9"/><circle cx="13.3" cy="13" r="4.3" fill="#666"/><path d="M10.5 11.5C12 11.5 12.5 13 14 13.5C15 14 15 16 14 17" stroke="#eee" stroke-width="1" fill="none"/></svg>
    <div class="a" style="left:1316px;top:12.5px;width:9.5px;height:2px;background:#666"></div>
    <div class="a" style="left:1330px;top:13px;width:126px;height:1px;background:#9a9a9a"></div>
    <div class="a" style="left:1390px;top:6.5px;width:6.5px;height:14px;background:#777"></div>
    <svg style="left:1460px;top:8px" width="12" height="12" viewBox="0 0 12 12"><path d="M6 0.5V11.5M0.5 6H11.5" stroke="#666" stroke-width="1.8"/></svg>
    <div class="st" style="left:1484px;top:3px;font-size:15.5px;line-height:20px">100%</div>
  </div>
</div>
<div id="panel">
  <!-- tile 1 -->
  <div class="a" style="left:16px;top:54px;width:210px;height:144px;background:#232323"></div>
  <div class="a" style="left:16px;top:54px;width:210px;height:2px;background:#fff"></div>
  <div class="a" style="left:16px;top:54px;width:2px;height:111px;background:#fff"></div>
  <div class="a" style="left:16px;top:165px;width:210px;height:33px;background:#575757"></div>
  <div class="a" style="left:18px;top:165px;width:208px;height:31px;background:#0b0b0b"></div>
  <div class="circ" style="top:84px">汪玲</div>
  <svg style="left:18px;top:171px" width="22" height="22" viewBox="0 0 22 22">
    <rect x="0" y="0" width="21" height="14.5" rx="2.5" fill="#fff"/>
    <path d="M6.5 11.5 C7 7.5 9.5 6 13 6.2" stroke="#0b0b0b" stroke-width="2" fill="none"/>
    <path d="M12 3.2 L16 6.3 L12 9.2 Z" fill="#0b0b0b"/>
    <path d="M4.5 21 C4.5 18.5 6 17.5 8 17.5 L13 17.5 C15 17.5 16.5 18.5 16.5 21 Z" fill="#fff"/>
  </svg>
  <svg style="left:50px;top:171px" width="19" height="21" viewBox="0 0 19 21">
    <rect x="5.2" y="0" width="8.6" height="14" rx="4.3" fill="#fff"/>
    <path d="M1.6 9.8 A7.9 7.9 0 0 0 17.4 9.8" stroke="#fff" stroke-width="2.6" fill="none"/>
    <rect x="8.2" y="16" width="2.6" height="5" fill="#fff"/>
  </svg>
  <div class="a" style="left:78px;top:171px;font-size:16px;line-height:22px;color:#fff">汪玲的屏幕共享</div>

  <!-- tile 2 -->
  <div class="a" style="left:16px;top:198px;width:210px;height:111px;background:#212121"></div>
  <div class="a" style="left:16px;top:309px;width:210px;height:33px;background:#0b0b0b"></div>
  <svg style="left:114px;top:228px" width="63" height="63" viewBox="0 0 63 63">
    <defs><clipPath id="cc"><circle cx="31.5" cy="31.5" r="31.5"/></clipPath>
    <filter id="bl"><feGaussianBlur stdDeviation="0.9"/></filter></defs>
    <g clip-path="url(#cc)"><g filter="url(#bl)">
      <rect x="-2" y="-2" width="67" height="67" fill="#e9dfd6"/>
      <path d="M-2 18L14 14L33 12L34 44L10 50L-2 52Z" fill="#3e2b27"/>
      <path d="M-2 40L20 38L22 63L-2 63Z" fill="#5a4540"/>
      <path d="M46 18L58 20L62 48L52 58L44 50Z" fill="#3a2925"/>
      <circle cx="57" cy="20" r="5" fill="#f3efec"/>
      <circle cx="7" cy="16" r="2.5" fill="#c23a3a"/><circle cx="7" cy="26" r="2.5" fill="#b83535"/><circle cx="50" cy="23" r="2" fill="#c23a3a"/>
      <path d="M22 50L50 50L52 65L22 65Z" fill="#4d3d39"/>
      <ellipse cx="35.2" cy="11" rx="3.2" ry="7" fill="#d6b38a" transform="rotate(-5 35.2 11)"/>
      <ellipse cx="45.8" cy="11.5" rx="3.2" ry="6.6" fill="#d6b38a" transform="rotate(15 45.8 11.5)"/>
      <ellipse cx="36" cy="41" rx="11" ry="10.5" fill="#c49c70"/>
      <ellipse cx="39" cy="25.4" rx="9.3" ry="8.2" fill="#d2ad82"/>
      <ellipse cx="38.5" cy="28" rx="3.5" ry="2.6" fill="#ead7bf"/>
      <ellipse cx="25" cy="33.5" rx="5" ry="3.8" fill="#cfa97c"/>
      <ellipse cx="48" cy="37" rx="4" ry="5" fill="#c49c70"/>
      <ellipse cx="20.8" cy="46.2" rx="6" ry="5" fill="#d8b78f"/>
      <ellipse cx="45.4" cy="52.2" rx="6.8" ry="5.5" fill="#d8b78f"/>
      <circle cx="45" cy="53" r="1.2" fill="#6b4b3a"/><circle cx="21" cy="47" r="1" fill="#6b4b3a"/>
    </g></g>
  </svg>
  <div class="a" style="left:18px;top:309px;width:108px;height:33px;background:#0dd27d"></div>
  <div class="a" style="left:27px;top:314px;font-size:17.6px;line-height:22px;color:#fff">联席主持人</div>
  <svg style="left:137px;top:315px" width="19" height="21" viewBox="0 0 19 21">
    <rect x="5.2" y="0" width="8.6" height="14" rx="4.3" fill="#fff"/>
    <path d="M1.6 9.8 A7.9 7.9 0 0 0 17.4 9.8" stroke="#fff" stroke-width="2.6" fill="none"/>
    <rect x="8.2" y="16" width="2.6" height="5" fill="#fff"/>
    <path d="M1.5 19 L18 2" stroke="#0b0b0b" stroke-width="3.2"/>
    <path d="M1.5 19 L18 2" stroke="#e8473d" stroke-width="1.8"/>
  </svg>
  <div class="a" style="left:165px;top:315px;font-size:16px;line-height:22px;color:#fff">李明磊</div>

  <!-- tile 3 -->
  <div class="a" style="left:16px;top:342px;width:210px;height:111px;background:#232323"></div>
  <div class="a" style="left:16px;top:453px;width:210px;height:33px;background:#0b0b0b"></div>
  <div class="circ" style="top:372px">黎宁</div>
  <div class="a" style="left:18px;top:453px;width:72px;height:33px;background:#f5a623"></div>
  <div class="a" style="left:27px;top:458px;font-size:17.6px;line-height:22px;color:#fff">主持人</div>
  <svg style="left:101px;top:459px" width="19" height="21" viewBox="0 0 19 21">
    <rect x="5.2" y="0" width="8.6" height="14" rx="4.3" fill="#fff"/>
    <path d="M1.6 9.8 A7.9 7.9 0 0 0 17.4 9.8" stroke="#fff" stroke-width="2.6" fill="none"/>
    <rect x="8.2" y="16" width="2.6" height="5" fill="#fff"/>
  </svg>
  <div class="a" style="left:129px;top:459px;font-size:16px;line-height:22px;color:#fff">黎宁</div>

  <!-- tile 4 -->
  <div class="a" style="left:16px;top:486px;width:210px;height:111px;background:#232323"></div>
  <div class="a" style="left:16px;top:597px;width:210px;height:33px;background:#0b0b0b"></div>
  <div class="circ" style="top:516px">葛芬</div>
  <svg style="left:25px;top:603px" width="19" height="21" viewBox="0 0 19 21">
    <rect x="5.2" y="0" width="8.6" height="14" rx="4.3" fill="#fff"/>
    <path d="M1.6 9.8 A7.9 7.9 0 0 0 17.4 9.8" stroke="#fff" stroke-width="2.6" fill="none"/>
    <rect x="8.2" y="16" width="2.6" height="5" fill="#fff"/>
  </svg>
  <div class="a" style="left:53px;top:603px;font-size:16px;line-height:22px;color:#fff">葛芬</div>

  <!-- tile 5 -->
  <div class="a" style="left:16px;top:630px;width:210px;height:111px;background:#232323"></div>
  <div class="a" style="left:16px;top:741px;width:210px;height:33px;background:#0b0b0b"></div>
  <div class="circ" style="top:660px">伟强</div>
  <svg style="left:25px;top:747px" width="19" height="21" viewBox="0 0 19 21">
    <rect x="5.2" y="0" width="8.6" height="14" rx="4.3" fill="#fff"/>
    <path d="M5.2 8 L13.8 8 L13.8 9.7 A4.3 4.3 0 0 1 5.2 9.7 Z" fill="#3ed35a"/>
    <path d="M1.6 9.8 A7.9 7.9 0 0 0 17.4 9.8" stroke="#fff" stroke-width="2.6" fill="none"/>
    <rect x="8.2" y="16" width="2.6" height="5" fill="#fff"/>
  </svg>
  <div class="a" style="left:53px;top:747px;font-size:16px;line-height:22px;color:#fff">刘伟强</div>
  <div class="a" style="left:63px;top:729px;width:163px;height:45px;background:rgba(0,0,0,0.55)"></div>
  <svg style="left:137px;top:746px" width="18" height="10" viewBox="0 0 18 10">
    <path d="M1 1 L9 8.5 L17 1" stroke="#fff" stroke-width="2" fill="none"/>
  </svg>
</div>
<svg style="left:1527px;top:404px" width="12" height="20" viewBox="0 0 12 20"><path d="M1 1L10 10L1 19" stroke="#fff" stroke-width="2" fill="none"/></svg>
</body></html>
